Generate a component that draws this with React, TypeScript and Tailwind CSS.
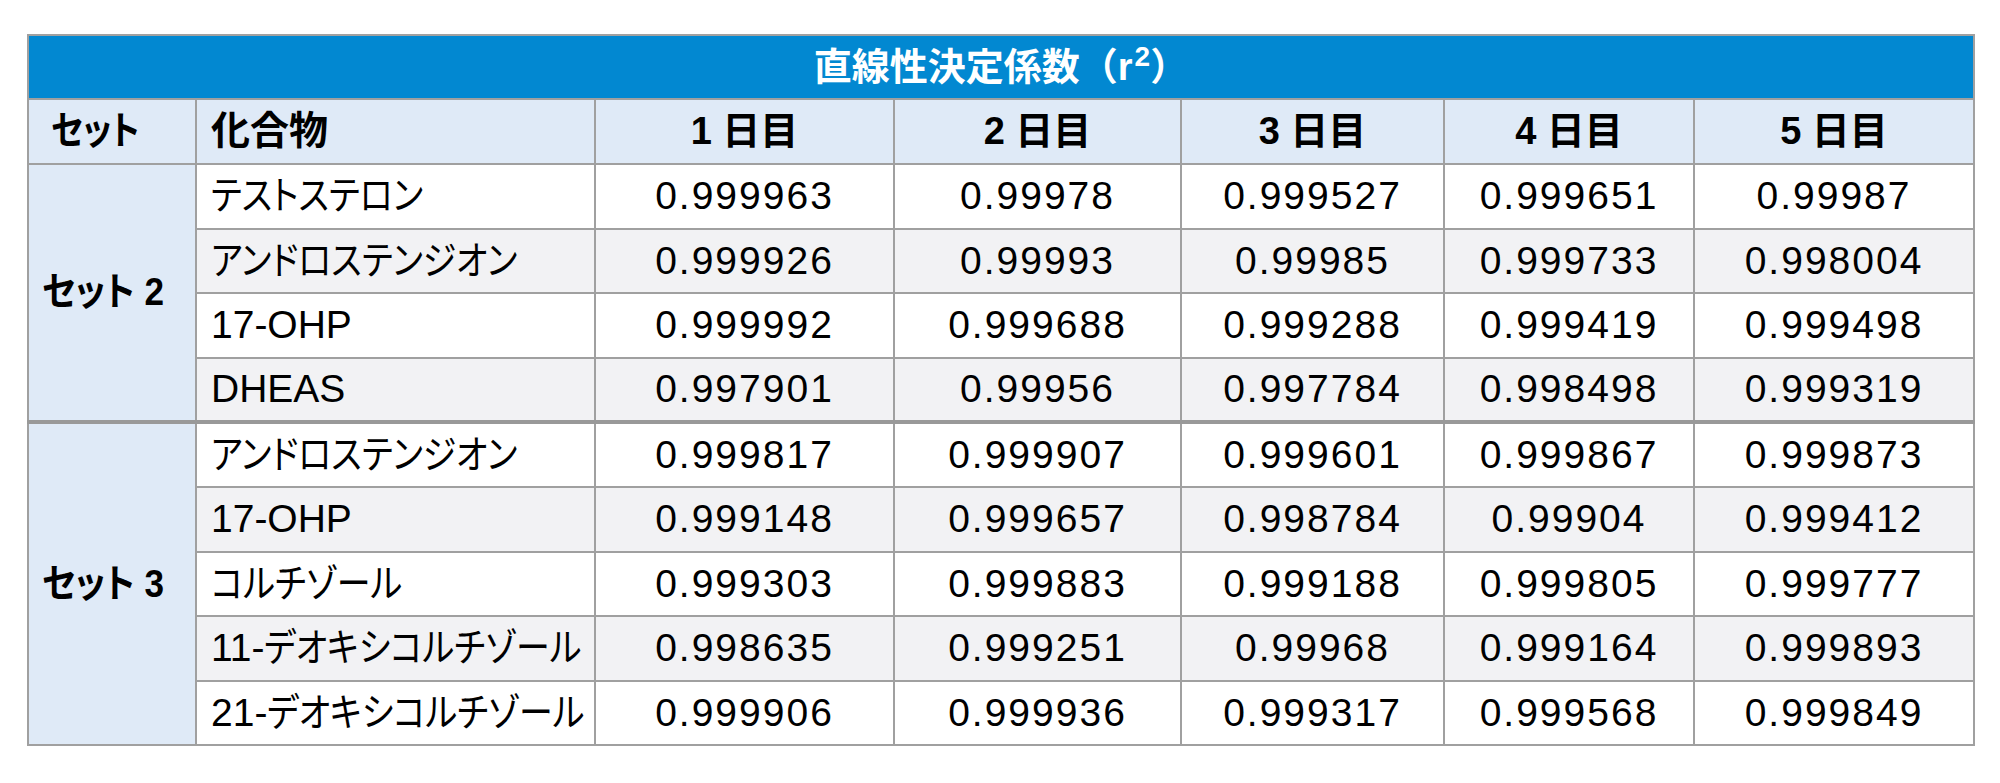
import React from "react"

type Row = { name: string; values: string[] }

const sets: { label: string; rows: Row[] }[] = [
  {
    label: "セット 2",
    rows: [
      { name: "テストステロン", values: ["0.999963", "0.99978", "0.999527", "0.999651", "0.99987"] },
      { name: "アンドロステンジオン", values: ["0.999926", "0.99993", "0.99985", "0.999733", "0.998004"] },
      { name: "17-OHP", values: ["0.999992", "0.999688", "0.999288", "0.999419", "0.999498"] },
      { name: "DHEAS", values: ["0.997901", "0.99956", "0.997784", "0.998498", "0.999319"] },
    ],
  },
  {
    label: "セット 3",
    rows: [
      { name: "アンドロステンジオン", values: ["0.999817", "0.999907", "0.999601", "0.999867", "0.999873"] },
      { name: "17-OHP", values: ["0.999148", "0.999657", "0.998784", "0.99904", "0.999412"] },
      { name: "コルチゾール", values: ["0.999303", "0.999883", "0.999188", "0.999805", "0.999777"] },
      { name: "11-デオキシコルチゾール", values: ["0.998635", "0.999251", "0.99968", "0.999164", "0.999893"] },
      { name: "21-デオキシコルチゾール", values: ["0.999906", "0.999936", "0.999317", "0.999568", "0.999849"] },
    ],
  },
]

const days = ["1 日目", "2 日目", "3 日目", "4 日目", "5 日目"]

// katakana in the source is set in a narrow face, so squeeze the non-latin runs
function Squeezed({ text }: { text: string }) {
  const runs = text.match(/[\x00-\x7f]+|[^\x00-\x7f]+/g) ?? []
  return (
    <>
      {runs.map((run, i) =>
        /^[\x00-\x7f]+$/.test(run) ? (
          <span key={i}>{run}</span>
        ) : (
          <span key={i} className="inline-block origin-left scale-x-[0.87]">
            {run}
          </span>
        )
      )}
    </>
  )
}

export default function App() {
  return (
    <div className="min-h-screen bg-white pt-[34px] pl-[27px] font-['Liberation_Sans','Noto_Sans_CJK_JP',sans-serif] text-black">
      <table className="w-[1946px] table-fixed border-collapse border-2 border-[#a0a0a0]">
        <colgroup>
          <col className="w-[168px]" />
          <col className="w-[399px]" />
          <col className="w-[299px]" />
          <col className="w-[287px]" />
          <col className="w-[263px]" />
          <col className="w-[250px]" />
          <col className="w-[280px]" />
        </colgroup>
        <thead>
          <tr className="h-[64px]">
            <th colSpan={7} className="border-2 border-[#a0a0a0] bg-[#0288d1] text-center text-[38px] font-bold text-white">
              直線性決定係数（r<sup className="ml-[2px] text-[28px]">2</sup>）
            </th>
          </tr>
          <tr className="h-[65px] bg-[#dfeaf7] text-[39px] font-bold [font-feature-settings:'palt']">
            <th className="border-2 border-[#a0a0a0] pl-[22px] text-left">
              <span className="inline-block origin-left scale-x-[0.86]">セット</span>
            </th>
            <th className="border-2 border-[#a0a0a0] pl-[14px] text-left">化合物</th>
            {days.map((d) => (
              <th key={d} className="border-2 border-[#a0a0a0] text-center text-[38px]">
                {d}
              </th>
            ))}
          </tr>
        </thead>
        {sets.map((s, si) => (
          <tbody key={s.label} className={si > 0 ? "border-t-4 border-[#999999]" : ""}>
            {s.rows.map((r, ri) => (
              <tr key={r.name} className={`h-[64.6px] ${ri % 2 === 1 ? "bg-[#f2f2f4]" : "bg-white"}`}>
                {ri === 0 && (
                  <td
                    rowSpan={s.rows.length}
                    className="whitespace-nowrap border-2 border-[#a0a0a0] bg-[#dfeaf7] pl-[13px] text-left text-[39px] font-bold [font-feature-settings:'palt']"
                  >
                    <span className="inline-block origin-left scale-x-[0.9]">{s.label}</span>
                  </td>
                )}
                <td className="whitespace-nowrap border-2 border-[#a0a0a0] pl-[14px] text-[39px] [font-feature-settings:'palt']">
                  <Squeezed text={r.name} />
                </td>
                {r.values.map((v, vi) => (
                  <td key={vi} className="border-2 border-[#a0a0a0] text-center text-[39px] tracking-[2px]">
                    {v}
                  </td>
                ))}
              </tr>
            ))}
          </tbody>
        ))}
      </table>
    </div>
  )
}
